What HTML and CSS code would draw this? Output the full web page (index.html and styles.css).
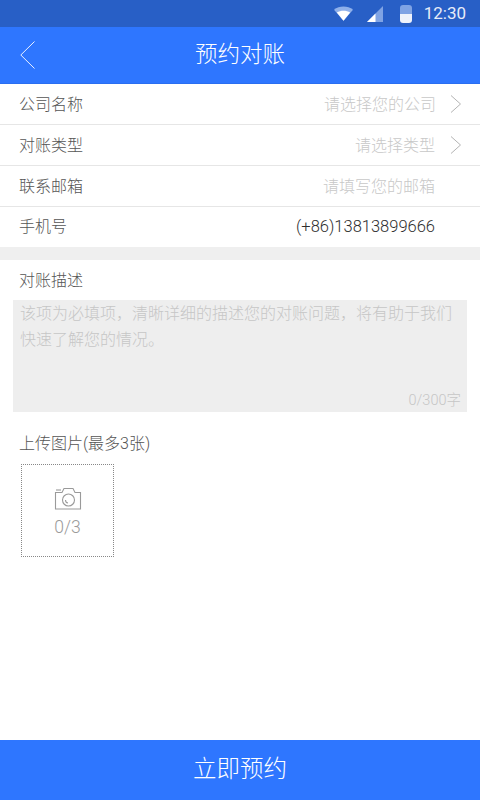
FILE: index.html
```html
<!DOCTYPE html>
<html lang="zh-CN">
<head>
<meta charset="utf-8">
<title>预约对账</title>
<link rel="stylesheet" href="styles.css">
</head>
<body>
<div class="app">
  <div class="status">
    <svg class="st-wifi" width="19" height="15" viewBox="0 0 20 15"><path d="M0 3.500C5.500-1 14.500-1 20 3.500L10 15Z" fill="#8fb0ea"/><path d="M3 6.500C7 4 13 4 17 6.500L10 15Z" fill="#fff"/></svg>
    <svg class="st-signal" width="16" height="16" viewBox="0 0 16 16"><path d="M0 16L16 0V16Z" fill="#7fa3e4"/><path d="M0 16L8.500 7.500V16Z" fill="#fff"/></svg>
    <svg class="st-batt" width="12" height="18" viewBox="0 0 12 18"><path d="M3 0H9Q12 0 12 3V9H0V3Q0 0 3 0Z" fill="#7fa3e4"/><path d="M0 9H12V15Q12 18 9 18H3Q0 18 0 15Z" fill="#eef2fb"/></svg>
    <span class="clock">12:30</span>
  </div>
  <header class="topbar">
    <svg class="back" width="16" height="28" viewBox="0 0 16 28"><path d="M14.500 0.500L0.800 14L14.500 27.500" fill="none" stroke="#fff" stroke-width="0.900"/></svg>
    <h1 class="title">预约对账</h1>
  </header>
  <section class="form">
    <div class="row"><span class="label">公司名称</span><span class="hint">请选择您的公司</span><svg class="chev" width="12" height="18" viewBox="0 0 12 18"><path d="M1 0.500L10.500 9L1 17.500" fill="none" stroke="#b4b4b4" stroke-width="1"/></svg></div>
    <div class="row"><span class="label">对账类型</span><span class="hint hint-type">请选择类型</span><svg class="chev" width="12" height="18" viewBox="0 0 12 18"><path d="M1 0.500L10.500 9L1 17.500" fill="none" stroke="#b4b4b4" stroke-width="1"/></svg></div>
    <div class="row"><span class="label">联系邮箱</span><span class="hint pad">请填写您的邮箱</span></div>
    <div class="row last"><span class="label">手机号</span><span class="phone pad">(+86)13813899666</span></div>
  </section>
  <div class="gap"></div>
  <section class="desc">
    <div class="sec-label">对账描述</div>
    <div class="textarea">
      <p class="placeholder">该项为必填项，清晰详细的描述您的对账问题，将有助于我们快速了解您的情况。</p>
      <span class="count">0/300字</span>
    </div>
  </section>
  <section class="upload">
    <div class="sec-label">上传图片(最多3张)</div>
    <div class="picker">
      <svg width="28" height="23" viewBox="0 0 28 23"><g fill="none" stroke="#9a9a9a" stroke-width="1.100"><path d="M1.500 5.500H8L10 1.500H19L21 5.500H26.500V22H1.500Z"/><circle cx="14.500" cy="13" r="6"/><path d="M11.500 13A3 3 0 0 0 14 16"/></g><path d="M2 3H7" stroke="#9a9a9a" stroke-width="1.100"/></svg>
      <span class="pick-count">0/3</span>
    </div>
  </section>
  <button class="submit">立即预约</button>
</div>
</body>
</html>
```

FILE: styles.css
```css
* { box-sizing: border-box; }
html, body { margin: 0; padding: 0; }
body { width: 480px; height: 800px; overflow: hidden; background: #fff; font-family: Roboto, "Noto Sans CJK SC", sans-serif; font-weight: 300; }
.app { width: 480px; height: 800px; display: flex; flex-direction: column; }
.status { height: 27px; background: #285fc6; display: flex; align-items: center; justify-content: flex-end; padding-right: 14px; }
.st-wifi { margin-right: 14px; }
.st-signal { margin-right: 17px; }
.st-batt { margin-right: 12px; }
.clock { font-size: 17px; font-weight: 400; color: #e6ecf8; line-height: 27px; }
.topbar { height: 57px; background: #2e76ff; display: flex; align-items: center; justify-content: center; position: relative; border-bottom: 1px solid #2a6ef0; }
.back { position: absolute; left: 20px; top: 14px; }
.title { margin: 0; font-size: 22.500px; font-weight: 300; color: #fff; line-height: 24px; position: relative; top: -1px; }
.form { display: flex; flex-direction: column; }
.row { height: 41px; display: flex; align-items: center; border-bottom: 1.500px solid #e6e6e6; padding: 0 18px 0 19px; }
.row.last { border-bottom: 0; height: 40px; }
.label { flex: 1; font-size: 16px; color: #555; line-height: 20px; padding-top: 2px; }
.hint { font-size: 16px; color: #c8c8c8; line-height: 20px; padding-top: 2px; }
.hint-type { margin-right: 2px; }
.row.last .label { padding-top: 0; }
.chev { margin-left: 14px; }
.hint-type + .chev { margin-left: 13px; }
.pad { margin-right: 27px; }
.phone { font-size: 16.500px; color: #2e2e2e; font-weight: 300; line-height: 20px; }
.gap { height: 13px; background: #efefef; }
.desc { padding: 0 13px; }
.sec-label { font-size: 16px; color: #555; line-height: 20px; padding-left: 6px; }
.desc .sec-label { padding-top: 11px; height: 40px; }
.textarea { height: 112px; background: #eeeeee; position: relative; padding: 1px 7px 0 7px; }
.placeholder { margin: 0; font-size: 16px; line-height: 26px; color: #c6c6c6; }
.count { position: absolute; right: 6px; bottom: 2px; font-size: 14.500px; line-height: 18px; color: #c6c6c6; }
.upload { padding: 22px 0 0 13px; }
.picker { margin: 10px 0 0 8px; width: 93px; height: 93px; border: 1px dotted #888; display: flex; flex-direction: column; align-items: center; justify-content: center; padding-top: 2px; }
.pick-count { font-size: 17.500px; color: #9a9a9a; line-height: 20px; margin-top: 7px; }
.submit { margin-top: auto; height: 60px; border: 0; background: #2e76ff; color: #fff; font-family: inherit; font-weight: 300; font-size: 23.500px; line-height: 24px; padding: 0 0 2px 0; }
```
